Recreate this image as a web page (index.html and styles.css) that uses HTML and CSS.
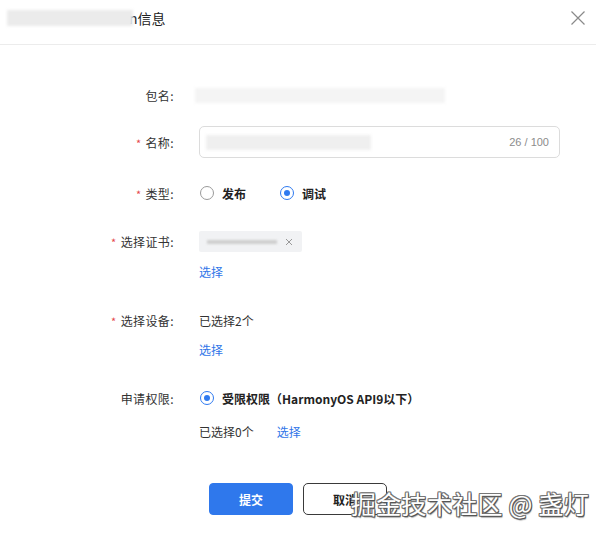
FILE: index.html
```html
<!DOCTYPE html>
<html lang="zh">
<head>
<meta charset="utf-8">
<link rel="stylesheet" href="styles.css">
</head>
<body>
<div class="dialog">
  <div class="dialog-header">
    <div class="title"><span class="masked title-mask"></span><span class="title-text">n信息</span></div>
    <svg class="close" width="16" height="16" viewBox="0 0 16 16"><path d="M1.5 1.5 L14.5 14.5 M14.5 1.5 L1.5 14.5" stroke="#8a8a8a" stroke-width="1.2" fill="none"/></svg>
  </div>

  <div class="form">
    <div class="item item-pkg">
      <div class="label">包名:</div>
      <div class="control"><span class="masked pkg-mask"></span></div>
    </div>

    <div class="item item-name">
      <div class="label"><span class="req">*</span>名称:</div>
      <div class="control">
        <div class="input">
          <span class="masked input-mask"></span>
          <span class="count">26 / 100</span>
        </div>
      </div>
    </div>

    <div class="item item-type">
      <div class="label"><span class="req">*</span>类型:</div>
      <div class="control radios">
        <label class="radio"><span class="dot"></span>发布</label>
        <label class="radio on"><span class="dot"></span>调试</label>
      </div>
    </div>

    <div class="item item-cert">
      <div class="label"><span class="req">*</span>选择证书:</div>
      <div class="control">
        <div class="tag"><span class="masked tag-mask"></span><svg class="tag-x" width="8" height="8" viewBox="0 0 8 8"><path d="M1 1 L7 7 M7 1 L1 7" stroke="#999" stroke-width="1" fill="none"/></svg></div>
      </div>
    </div>
    <div class="item item-link"><div class="label"></div><div class="control"><a class="link">选择</a></div></div>

    <div class="item item-dev">
      <div class="label"><span class="req">*</span>选择设备:</div>
      <div class="control">已选择2个</div>
    </div>
    <div class="item item-link"><div class="label"></div><div class="control"><a class="link">选择</a></div></div>

    <div class="item item-perm">
      <div class="label">申请权限:</div>
      <div class="control radios">
        <label class="radio on strong"><span class="dot"></span>受限权限（HarmonyOS API9以下）</label>
      </div>
    </div>
    <div class="item item-perm2"><div class="label"></div><div class="control">已选择0个<a class="link link-inline">选择</a></div></div>

    <div class="actions">
      <button class="btn primary">提交</button>
      <button class="btn plain">取消</button>
    </div>
  </div>

  <div class="watermark">掘金技术社区 @ 盏灯</div>
</div>
</body>
</html>
```

FILE: styles.css
```css
* { box-sizing: border-box; }

html, body {
  margin: 0;
  padding: 0;
  background: #fff;
}

body {
  font-family: "PingFang SC", "Noto Sans CJK SC", "Liberation Sans", sans-serif;
  font-size: 12px;
  color: #222;
  width: 596px;
  height: 533px;
  overflow: hidden;
}

.dialog {
  position: relative;
  width: 596px;
  height: 533px;
}

/* header */
.dialog-header {
  height: 45px;
  border-bottom: 1px solid #ececec;
  display: flex;
  align-items: center;
  justify-content: space-between;
  padding: 0 10px 8px 7px;
}

.title {
  display: flex;
  align-items: center;
  font-size: 14px;
  color: #222;
}

.masked {
  display: inline-block;
  filter: blur(1.5px);
}

.title-mask {
  width: 126px;
  height: 16px;
  background: #ebebeb;
}

.title-text { margin-left: -4px; }

/* form */
.form {
  padding-top: 40px;
}

.item {
  display: flex;
  align-items: center;
  min-height: 20px;
}

.label {
  width: 175px;
  flex: none;
  text-align: right;
  padding-right: 1px;
  color: #333;
  font-size: 12px;
  letter-spacing: 0.4px;
}

.req {
  color: #e5484d;
  margin-right: 4px;
  font-size: 11px;
}

.control {
  margin-left: 24px;
  display: flex;
  align-items: center;
  color: #333;
}

.item-pkg { height: 20px; }
.pkg-mask {
  width: 250px;
  height: 15px;
  margin-left: -4px;
  background: #f4f4f4;
}

.item-name { margin-top: 21px; }
.input {
  width: 361px;
  height: 32px;
  border: 1px solid #dcdcdc;
  border-radius: 5px;
  display: flex;
  align-items: center;
  justify-content: space-between;
  padding: 0 10px 0 6px;
}
.input-mask {
  width: 165px;
  height: 15px;
  background: #efefef;
}
.count {
  color: #8c8c8c;
  font-size: 11px;
  font-family: "Liberation Sans", sans-serif;
}

.item-type { margin-top: 25px; height: 20px; }

.radio {
  display: inline-flex;
  align-items: center;
  margin-right: 33px;
  color: #222;
  font-weight: 600;
  font-size: 12px;
}
.radio .dot {
  width: 14px;
  height: 14px;
  border-radius: 50%;
  border: 1px solid #9a9a9a;
  margin-right: 8px;
  margin-left: 1px;
  position: relative;
  flex: none;
}
.radio.on .dot {
  border-color: #2f7af0;
}
.radio.on .dot::after {
  content: "";
  position: absolute;
  left: 3px;
  top: 3px;
  width: 6px;
  height: 6px;
  border-radius: 50%;
  background: #2f7af0;
}

.item-cert { margin-top: 28px; }
.tag {
  width: 103px;
  height: 21px;
  background: #f1f2f4;
  border-radius: 2px;
  display: flex;
  align-items: center;
  justify-content: space-between;
  padding: 0 9px 0 8px;
}
.tag-mask {
  width: 70px;
  height: 4px;
  background: #cfcfcf;
  filter: blur(1px);
}

.item-link { margin-top: 9px; height: 20px; }
.link {
  color: #2f75e8;
  font-size: 12px;
  cursor: pointer;
}
.link-inline { margin-left: 23px; }

.item-dev { margin-top: 29px; height: 20px; }

.item-perm { margin-top: 29px; height: 20px; }
.radio.strong { font-weight: 600; }

.item-perm2 { margin-top: 13px; height: 20px; }

/* footer buttons */
.actions {
  display: flex;
  margin-top: 42px;
  padding-left: 209px;
  gap: 10px;
}
.btn {
  width: 84px;
  height: 32px;
  border-radius: 4px;
  font-family: inherit;
  font-size: 12px;
  font-weight: 600;
}
.btn.primary {
  background: #2f78ec;
  border: 1px solid #2f78ec;
  color: #fff;
}
.btn.plain {
  background: #fff;
  border: 1px solid #3a3a3a;
  color: #222;
  border-radius: 5px;
}

/* site watermark over the footer */
.watermark {
  position: absolute;
  left: 351px;
  top: 485px;
  font-size: 25px;
  color: #fff;
  white-space: nowrap;
  letter-spacing: 0.3px;
  text-shadow:
    1px 1px 0 #555, -1px -1px 0 #777, 1px -1px 0 #777, -1px 1px 0 #777,
    1px 0 0 #666, -1px 0 0 #777, 0 1px 0 #555, 0 -1px 0 #777,
    1px 2px 1px rgba(0,0,0,0.35);
}
```
